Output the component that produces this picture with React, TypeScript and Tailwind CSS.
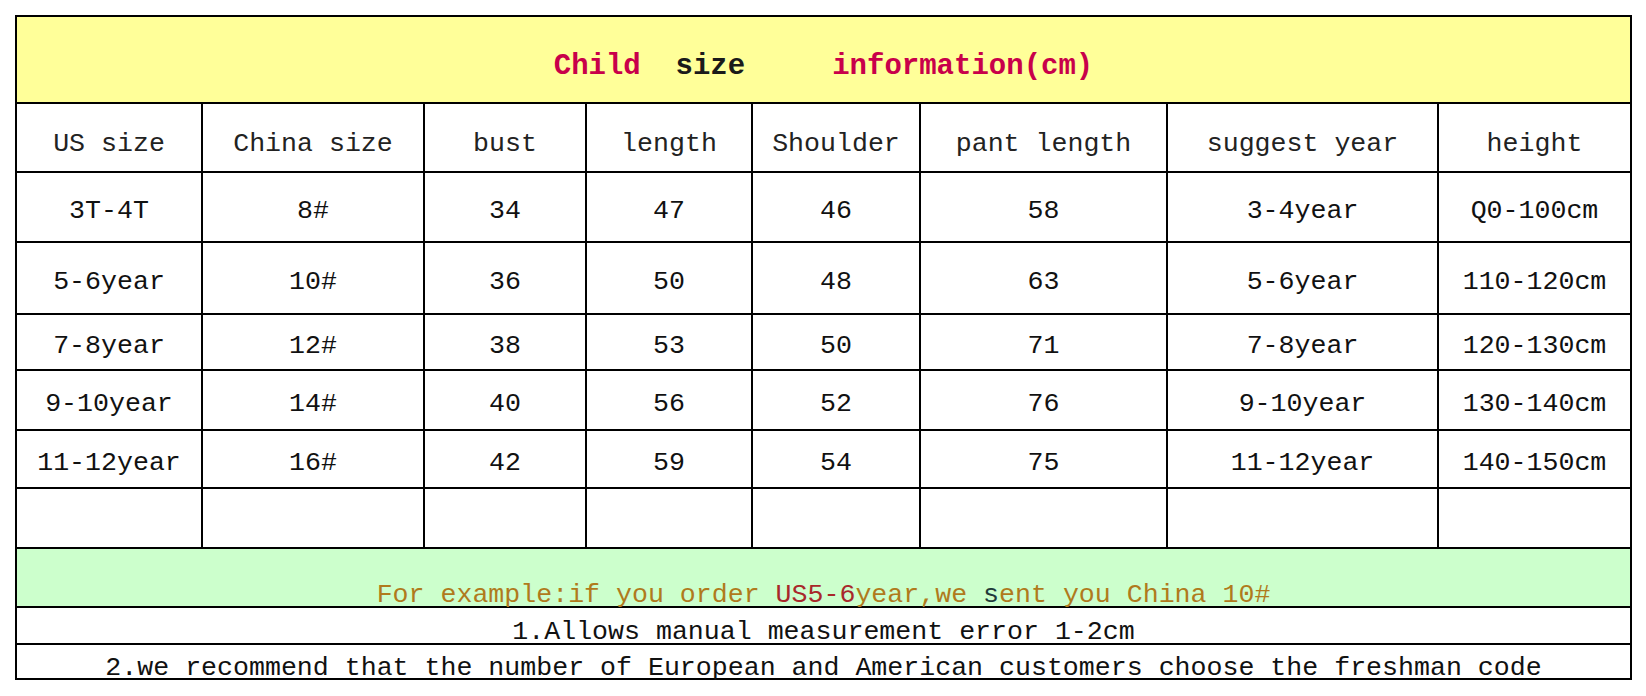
import React from "react";

const headers = ["US size", "China size", "bust", "length", "Shoulder", "pant length", "suggest year", "height"];

const rows: { h: string; cells: string[] }[] = [
  { h: "h-[70px]", cells: ["3T-4T", "8#", "34", "47", "46", "58", "3-4year", "Q0-100cm"] },
  { h: "h-[72px]", cells: ["5-6year", "10#", "36", "50", "48", "63", "5-6year", "110-120cm"] },
  { h: "h-[56px]", cells: ["7-8year", "12#", "38", "53", "50", "71", "7-8year", "120-130cm"] },
  { h: "h-[60px]", cells: ["9-10year", "14#", "40", "56", "52", "76", "9-10year", "130-140cm"] },
  { h: "h-[58px]", cells: ["11-12year", "16#", "42", "59", "54", "75", "11-12year", "140-150cm"] },
  { h: "h-[60px]", cells: ["", "", "", "", "", "", "", ""] },
];

const mono = { fontFamily: '"Liberation Mono", "DejaVu Sans Mono", monospace' };

export default function App() {
  return (
    <div className="min-h-[696px] w-full bg-white pl-[15px] pt-[15px]" style={mono}>
      <div className="w-[1617px] border-2 border-black">
        <div className="grid grid-cols-[186px_222px_162px_166px_168px_247px_271px_191px] text-[26.6px] leading-none text-[#111]">
          <div className="col-span-8 flex h-[87px] items-center justify-center border-b-2 border-black bg-[#ffff99] pt-[13px]">
            <span className="whitespace-pre text-[29px] font-bold text-[#c8004a]">
              {"Child  "}
              <span className="text-[#1a1a1a]">size</span>
              {"     information(cm)"}
            </span>
          </div>
          {headers.map((t, i) => (
            <div
              key={t}
              className={`flex h-[69px] items-center justify-center border-b-2 border-black pt-[13px] text-[#222] ${i < 7 ? "border-r-2" : ""}`}
            >
              <span className="whitespace-pre">{t}</span>
            </div>
          ))}
          {rows.map((r, ri) =>
            r.cells.map((c, i) => (
              <div
                key={`${ri}-${i}`}
                className={`flex ${r.h} items-center justify-center border-b-2 border-black pt-[9px] ${i < 7 ? "border-r-2" : ""}`}
              >
                <span className="whitespace-pre">{c}</span>
              </div>
            ))
          )}
          <div className="col-span-8 flex h-[59px] items-end justify-center border-b-2 border-black bg-[#ccffcc]">
            <span className="whitespace-pre leading-[22px] text-[#b07a1c]">
              {"For example:if you order "}
              <span className="text-[#a8282a]">US5-6</span>
              {"year,we "}
              <span className="text-[#1f3a3a]">s</span>
              {"ent you China 10#"}
            </span>
          </div>
          <div className="col-span-8 flex h-[37px] items-center justify-center border-b-2 border-black pt-[13px]">
            <span className="whitespace-pre">1.Allows manual measurement error 1-2cm</span>
          </div>
          <div className="col-span-8 flex h-[33px] items-center justify-center pt-[13px]">
            <span className="whitespace-pre">
              2.we recommend that the number of European and American customers choose the freshman code
            </span>
          </div>
        </div>
      </div>
    </div>
  );
}
